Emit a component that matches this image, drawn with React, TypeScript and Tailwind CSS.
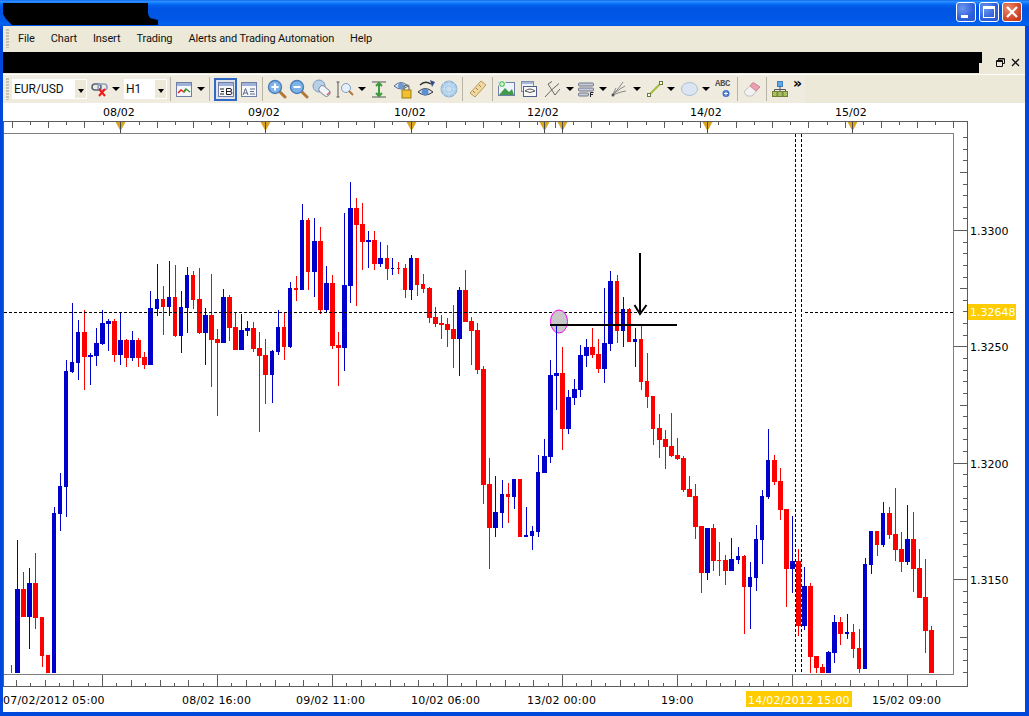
import type { ReactNode } from "react";

// [left, width, bodyTop, bodyBottom, wickTop, wickBottom]
type Candle = [number, number, number, number, number, number];

const BLUE: Candle[] = [
  [15, 5, 589, 673, 540, 673], [27, 5, 583, 617, 568, 649], [52, 4, 513, 673, 507, 673], [58, 4, 486, 514, 473, 531],
  [64, 4, 371, 487, 360, 517], [70, 4, 362, 372, 303, 373], [76, 4, 332, 363, 320, 380], [88, 5, 355, 357, 353, 385],
  [94, 5, 343, 356, 328, 366], [100, 5, 323, 344, 310, 345], [106, 5, 321, 324, 319, 351], [118, 5, 340, 355, 313, 365],
  [130, 5, 340, 358, 331, 361], [148, 5, 308, 365, 291, 365], [155, 4, 299, 309, 264, 316], [167, 4, 297, 307, 261, 316],
  [179, 4, 307, 336, 291, 353], [185, 4, 275, 308, 267, 333], [203, 5, 315, 333, 308, 365], [221, 5, 297, 343, 289, 343],
  [239, 5, 330, 350, 314, 350], [245, 5, 328, 331, 321, 336], [270, 4, 351, 375, 350, 403], [276, 4, 327, 352, 310, 355],
  [288, 4, 288, 347, 282, 348], [300, 4, 220, 290, 204, 290], [312, 5, 241, 272, 218, 297], [324, 5, 283, 310, 266, 312],
  [342, 5, 285, 348, 213, 371], [348, 5, 208, 286, 182, 303], [366, 5, 240, 242, 231, 268], [378, 5, 258, 264, 242, 267],
  [391, 3, 268, 269, 258, 275], [409, 4, 258, 290, 255, 300], [457, 5, 290, 339, 287, 376], [493, 5, 512, 528, 476, 537],
  [500, 4, 494, 513, 480, 528], [512, 4, 479, 497, 479, 509], [524, 4, 535, 537, 507, 537], [530, 4, 531, 536, 526, 550],
  [536, 4, 472, 532, 455, 537], [542, 5, 456, 473, 439, 473], [548, 5, 375, 457, 360, 463], [554, 5, 373, 376, 325, 410],
  [566, 5, 397, 429, 390, 434], [572, 5, 389, 398, 379, 405], [578, 5, 355, 390, 345, 397], [584, 5, 347, 356, 339, 367],
  [602, 5, 343, 369, 288, 383], [608, 5, 281, 344, 271, 351], [621, 4, 309, 331, 297, 347], [633, 4, 339, 342, 328, 367],
  [705, 5, 528, 573, 528, 580], [729, 5, 559, 571, 538, 571], [736, 4, 556, 560, 547, 564], [748, 4, 577, 587, 562, 629],
  [754, 4, 539, 578, 525, 591], [760, 4, 496, 540, 490, 564], [766, 4, 460, 497, 429, 499], [790, 5, 561, 569, 516, 593],
  [802, 5, 586, 626, 567, 630], [826, 5, 652, 673, 651, 673], [832, 5, 622, 653, 615, 663], [845, 4, 632, 634, 614, 639],
  [863, 4, 564, 669, 558, 669], [869, 4, 531, 565, 531, 574], [881, 4, 513, 545, 502, 547], [905, 5, 539, 562, 505, 565],
];

const RED: Candle[] = [
  [11, 1, 673, 673, 665, 673], [21, 5, 589, 617, 572, 617], [33, 5, 583, 618, 553, 629], [40, 4, 617, 656, 617, 667],
  [46, 4, 655, 673, 655, 673], [82, 5, 332, 357, 310, 390], [112, 5, 321, 355, 319, 362], [124, 5, 340, 358, 339, 367],
  [136, 5, 340, 358, 338, 367], [142, 5, 357, 365, 352, 369], [161, 4, 299, 307, 286, 335], [173, 4, 297, 336, 265, 337],
  [191, 4, 275, 300, 271, 309], [197, 5, 299, 333, 268, 334], [209, 5, 315, 340, 274, 387], [215, 5, 339, 343, 329, 416],
  [227, 5, 297, 328, 295, 341], [233, 5, 327, 350, 312, 350], [251, 5, 328, 349, 322, 352], [257, 5, 348, 356, 332, 432],
  [263, 5, 355, 375, 339, 404], [282, 4, 327, 347, 312, 360], [294, 4, 288, 290, 276, 301], [306, 4, 220, 272, 218, 290],
  [318, 5, 241, 310, 227, 314], [330, 5, 283, 346, 275, 349], [336, 5, 345, 348, 332, 386], [354, 5, 208, 225, 198, 306],
  [360, 5, 224, 242, 203, 270], [372, 5, 240, 264, 231, 270], [385, 4, 258, 269, 245, 280], [397, 3, 268, 269, 262, 274],
  [403, 4, 268, 290, 264, 298], [415, 4, 258, 285, 258, 296], [421, 4, 284, 289, 274, 293], [427, 5, 288, 318, 287, 323],
  [433, 5, 317, 324, 307, 327], [439, 5, 323, 325, 315, 339], [445, 5, 324, 330, 318, 347], [451, 5, 329, 339, 305, 368],
  [463, 5, 290, 322, 270, 322], [469, 5, 321, 331, 317, 365], [475, 5, 330, 370, 323, 374], [481, 5, 369, 485, 366, 504],
  [487, 5, 484, 528, 458, 569], [506, 4, 494, 497, 483, 523], [518, 4, 479, 537, 479, 537], [560, 5, 373, 429, 347, 450],
  [590, 5, 347, 355, 328, 358], [596, 5, 354, 369, 339, 373], [615, 4, 281, 331, 275, 343], [627, 4, 309, 342, 308, 342],
  [639, 4, 339, 382, 325, 390], [645, 4, 381, 397, 353, 408], [651, 4, 396, 429, 396, 445], [657, 5, 428, 440, 414, 458],
  [663, 5, 439, 447, 430, 469], [669, 5, 446, 456, 413, 457], [675, 5, 455, 459, 438, 460], [681, 5, 458, 490, 456, 492],
  [687, 5, 489, 497, 476, 497], [693, 5, 496, 527, 484, 539], [699, 5, 526, 573, 526, 593], [711, 5, 528, 561, 524, 571],
  [717, 4, 560, 561, 542, 576], [723, 5, 560, 571, 555, 585], [742, 4, 556, 587, 555, 634], [772, 5, 460, 482, 455, 485],
  [778, 5, 481, 510, 468, 520], [784, 5, 509, 569, 509, 607], [796, 5, 561, 626, 549, 636], [808, 5, 586, 657, 583, 673],
  [814, 5, 656, 668, 656, 673], [820, 5, 667, 673, 664, 673], [838, 5, 622, 634, 617, 645], [851, 4, 632, 649, 624, 658],
  [857, 4, 648, 669, 629, 673], [875, 4, 531, 545, 531, 556], [887, 5, 513, 535, 507, 539], [893, 5, 534, 550, 488, 561],
  [899, 5, 549, 562, 532, 572], [911, 5, 539, 569, 512, 592], [917, 5, 568, 598, 549, 598], [923, 5, 597, 631, 559, 653],
  [929, 5, 630, 673, 626, 673],
];

const TOP_LABELS: [number, string][] = [[103, "08/02"], [248, "09/02"], [394, "10/02"], [527, "12/02"], [690, "14/02"], [835, "15/02"]];
const TOP_MARKS = [120, 265, 411, 544, 562, 707, 852];
const BOTTOM_LABELS: [number, string][] = [[3, "07/02/2012 05:00"], [182, "08/02 16:00"], [296, "09/02 11:00"], [411, "10/02 06:00"], [527, "13/02 00:00"], [661, "19:00"], [872, "15/02 09:00"]];
const PRICES: [number, string][] = [[231, "1.3300"], [347, "1.3250"], [464, "1.3200"], [580, "1.3150"]];

const topTicks = Array.from({ length: 53 }, (_, i) => 12 + i * 18.1);
const bottomTicks = Array.from({ length: 66 }, (_, i) => 102 + (i - 7) * 14.375);
const rightTicks = Array.from({ length: 47 }, (_, i) => 137 + i * 11.633);

function Candles({ data, color }: { data: Candle[]; color: string }) {
  return (
    <g fill={color}>
      {data.map(([left, w, top, bottom, wickTop, wickBottom]) => (
        <g key={left}>
          <rect x={left + Math.floor(w / 2)} y={wickTop} width={1} height={wickBottom - wickTop} />
          <rect x={left} y={top} width={w} height={bottom - top} />
        </g>
      ))}
    </g>
  );
}

function ChartCanvas() {
  return (
    <svg viewBox="3 103 1022 609" className="block w-[1022px] h-[609px] font-['DejaVu_Sans',sans-serif] text-[11px]">
      <rect x="3" y="103" width="1022" height="609" fill="#fff" />
      <g fill="#000">
        {TOP_LABELS.map(([x, t]) => <text key={t} x={x} y={116}>{t}</text>)}
      </g>

      <g shapeRendering="crispEdges" stroke="#5c5c5c" fill="none">
        <path d="M3 121.5H967.5V686.5H3.5V121.5" />
        <path d="M3.5 133.5H953.5V674.5H3.5" stroke="#808080" />
        {topTicks.map((x, i) => (
          <line key={x} x1={Math.round(x) + 0.5} x2={Math.round(x) + 0.5} y1={122} y2={i % 2 ? 125 : 128} />
        ))}
        {bottomTicks.map((x, i) => {
          const k = i - 7;
          if (k % 8 === 0) return <line key={x} x1={Math.round(x) + 0.5} x2={Math.round(x) + 0.5} y1={675} y2={686} />;
          return <line key={x} x1={Math.round(x) + 0.5} x2={Math.round(x) + 0.5} y1={k % 2 ? 683 : 680} y2={686} />;
        })}
        {rightTicks.map((y, i) => {
          const k = i - 8;
          const yy = Math.round(y) + 0.5;
          if (k % 10 === 0) return <line key={y} x1={954} x2={967} y1={yy} y2={yy} />;
          return <line key={y} x1={k % 5 === 0 ? 960 : 963} x2={967} y1={yy} y2={yy} />;
        })}
      </g>
      <g fill="#d9a520">
        {TOP_MARKS.map((x) => <path key={x} d={`M${x - 4.5} 122H${x + 5.5}L${x + 0.5} 131Z`} />)}
      </g>
      <g stroke="#4a4a4a" shapeRendering="crispEdges">
        {TOP_MARKS.map((x) => <line key={x} x1={x + 0.5} x2={x + 0.5} y1={122} y2={133} />)}
      </g>

      <Candles data={BLUE} color="#0000cc" />
      <Candles data={RED} color="#ff0000" />

      {/* crosshair */}
      <g stroke="#000" strokeDasharray="3 2" shapeRendering="crispEdges">
        <line x1={4} x2={793} y1={312.5} y2={312.5} />
        <line x1={805} x2={953} y1={312.5} y2={312.5} />
        <line x1={795.5} x2={795.5} y1={134} y2={674} />
        <line x1={801.5} x2={801.5} y1={134} y2={674} />
      </g>

      {/* manual drawings */}
      <ellipse cx="559" cy="321.5" rx="8.5" ry="11.5" fill="#c8c8c8" stroke="#ff00ff" />
      <rect x="556" y="325" width="1" height="9" fill="#0000cc" />
      <rect x="550" y="324" width="127" height="2" fill="#000" />
      <path d="M640 253V313M634.5 305L640 314L646.5 305" fill="none" stroke="#000" strokeWidth="2" />

      <g fill="#000">
        {PRICES.map(([y, t]) => <text key={t} x={970} y={y + 4}>{t}</text>)}
        {BOTTOM_LABELS.map(([x, t]) => <text key={t} x={x} y={704} className="tracking-[0.2px]">{t}</text>)}
      </g>
      <rect x="968" y="304" width="48" height="16" fill="#ffcc00" />
      <text x="970" y="316" fill="#fff">1.32648</text>
      <rect x="746" y="691" width="106" height="16" fill="#ffcc00" />
      <text x="748" y="704" fill="#fff" className="tracking-[0.2px]">14/02/2012 15:00</text>
    </svg>
  );
}

function Grip() {
  return <div className="w-[3px] self-stretch my-[3px] ml-[3px] bg-[repeating-linear-gradient(to_bottom,#c4c1b1_0,#c4c1b1_2px,transparent_2px,transparent_3px)]" />;
}

function Sep() {
  return <div className="w-px h-[24px] bg-[#b8b5a6]" />;
}

function Gap({ w }: { w: string }) {
  return <div className={w} />;
}

function Arrow({ w = "w-[8px]" }: { w?: string }) {
  return (
    <div className={`${w} flex justify-center`}>
      <div className="shrink-0 w-0 h-0 border-x-[4px] border-x-transparent border-t-[4px] border-t-black" />
    </div>
  );
}

function Slot({ w, children }: { w: string; children: ReactNode }) {
  return <div className={`${w} flex items-center justify-center`}>{children}</div>;
}

function Combo({ w, label }: { w: string; label: string }) {
  return (
    <div className={`${w} h-[20px] bg-white border border-white flex items-center justify-between text-[12px] font-['Roboto',sans-serif]`}>
      <span className="pl-[1px] text-[#111]">{label}</span>
      <div className="w-[11px] h-full bg-[#ece9d8] flex items-center justify-center">
        <div className="w-0 h-0 border-x-[3.5px] border-x-transparent border-t-[4px] border-t-black mt-[3px]" />
      </div>
    </div>
  );
}

function Svg({ w = 20, h = 20, children }: { w?: number; h?: number; children: ReactNode }) {
  return <svg width={w} height={h} viewBox={`0 0 ${w} ${h}`} className="shrink-0">{children}</svg>;
}

function Magnifier({ sign }: { sign: "+" | "-" }) {
  return (
    <Svg>
      <path d="M12 12L18 18" stroke="#b5763a" strokeWidth="3" strokeLinecap="round" />
      <circle cx="8" cy="8" r="6.5" fill="#7fb3e8" stroke="#4a7fb8" strokeWidth="1.4" />
      <path d={sign === "+" ? "M4.5 8H11.5M8 4.5V11.5" : "M4.5 8H11.5"} stroke="#fff" strokeWidth="2" />
    </Svg>
  );
}

function Window({ children }: { children: ReactNode }) {
  return (
    <Svg w={16} h={15}>
      <rect x=".5" y=".5" width="15" height="14" fill="#f5f7fb" stroke="#6f7fa6" />
      <rect x="1" y="1" width="14" height="3" fill="#9fb3d8" />
      {children}
    </Svg>
  );
}

function Toolbar() {
  return (
    <div className="h-[29px] flex items-center bg-[#ece9d8] border-t border-t-white">
      <div className="h-full w-[802px] flex items-center bg-[#efecdf]">
        <Grip />
        <Gap w="w-[3px]" />
        <Combo w="w-[75px]" label="EUR/USD" />
        <Gap w="w-[3px]" />
        <Slot w="w-[20px]">
          <Svg w={18} h={16}>
            <rect x="1" y="3" width="9" height="6" rx="3" fill="none" stroke="#55657f" strokeWidth="1.6" />
            <rect x="7" y="3" width="9" height="6" rx="3" fill="none" stroke="#8ba0c0" strokeWidth="1.6" />
            <path d="M8 8L14 15M14 8L8 15" stroke="#f01818" strokeWidth="2" />
          </Svg>
        </Slot>
        <Slot w="w-[12px]"><Arrow /></Slot>
        <Gap w="w-[2px]" />
        <Combo w="w-[43px]" label="H1" />
        <Gap w="w-[3px]" />
        <Sep />
        <Slot w="w-[26px]">
          <Window><path d="M2 11L5 8L8 10L10 7" stroke="#e02020" fill="none" strokeWidth="1.5" /><path d="M8 10L10 7L14 10" stroke="#30a030" fill="none" strokeWidth="1.5" /></Window>
        </Slot>
        <Arrow />
        <Gap w="w-[4px]" />
        <Sep />
        <Gap w="w-[4px]" />
        <div className="w-[23px] h-[23px] border-2 border-[#316ac5] bg-[#e2e3ea] flex items-center justify-center">
          <Window>
            <path d="M2 7H6M3 9.5H6M2 12H6" stroke="#222" />
            <path d="M8.5 6.5H12Q13.5 6.5 13.5 8Q13.5 9.5 12 9.5H8.5M12 9.5Q14 9.5 14 11Q14 12.5 12 12.5H8.5V6.5" fill="none" stroke="#222" />
          </Window>
        </div>
        <Slot w="w-[23px]">
          <Window>
            <path d="M2 13L4.5 6.5L7 13M3 11H6" fill="none" stroke="#5a6a88" />
            <path d="M9 7H14M9 9.5H13M9 12H14" stroke="#5a6a88" />
          </Window>
        </Slot>
        <Gap w="w-[2px]" />
        <Sep />
        <Gap w="w-[3px]" />
        <Slot w="w-[22px]"><Magnifier sign="+" /></Slot>
        <Slot w="w-[22px]"><Magnifier sign="-" /></Slot>
        <Slot w="w-[23px]">
          <Svg>
            <circle cx="7" cy="7" r="6" fill="#b8cfe8" stroke="#7f9bc0" />
            <rect x="7" y="8" width="12" height="7" rx="3" transform="rotate(40 12 11)" fill="#f2f4f8" stroke="#8a92a8" />
            <path d="M15 16L18 13" stroke="#d86060" strokeWidth="1.5" />
          </Svg>
        </Slot>
        <Slot w="w-[24px]">
          <Svg>
            <path d="M3 3V18M1.5 3H4.5M1.5 18H4.5" stroke="#555" fill="none" />
            <circle cx="11" cy="9" r="4.5" fill="#e6f0fa" stroke="#7f9bc0" />
            <path d="M14 12L18 16" stroke="#b5763a" strokeWidth="2" />
          </Svg>
        </Slot>
        <Slot w="w-[10px]"><Arrow /></Slot>
        <Slot w="w-[24px]">
          <Svg>
            <path d="M3 3H17M3 18H17" stroke="#555" />
            <path d="M10 4V16M7 7L10 4L13 7M7 14L10 17L13 14" stroke="#3c9a3c" strokeWidth="2" fill="none" />
          </Svg>
        </Slot>
        <Slot w="w-[24px]">
          <Svg>
            <path d="M1 7Q8 0 15 7Q8 13 1 7Z" fill="#d8e4f2" stroke="#5a6a88" />
            <circle cx="8" cy="7" r="3" fill="#6f9ad0" />
            <rect x="9" y="11" width="9" height="8" fill="#f0c030" stroke="#a07c10" />
            <path d="M11 11V8.5A2.5 2.5 0 0 1 16 8.5V11" fill="none" stroke="#777" strokeWidth="1.3" />
          </Svg>
        </Slot>
        <Slot w="w-[22px]">
          <Svg>
            <path d="M2 13Q9 6 17 13Q9 19 2 13Z" fill="#d8e4f2" stroke="#333" />
            <circle cx="9" cy="13" r="3.5" fill="#5d8ed0" />
            <path d="M4 6Q9 1 15 5" stroke="#333" strokeWidth="1.3" fill="none" />
            <path d="M14 1L19 3L16 8Z" fill="#3a4a8a" />
          </Svg>
        </Slot>
        <Slot w="w-[24px]">
          <Svg>
            <circle cx="10" cy="10" r="8" fill="#a7cbe8" stroke="#8fb0d0" />
            <circle cx="10" cy="10" r="5" fill="none" stroke="#d5e6f4" />
            <circle cx="10" cy="10" r="2" fill="none" stroke="#d5e6f4" />
            <path d="M10 2V18M2 10H18M4 4L16 16M16 4L4 16" stroke="#d5e6f4" strokeWidth=".6" />
          </Svg>
        </Slot>
        <Gap w="w-px" />
        <Sep />
        <Slot w="w-[29px]">
          <Svg>
            <path d="M2 14L13 2L18 6L7 18Z" fill="#f0d8a0" stroke="#b89a5a" />
            <path d="M5 12L7 14M8 9L10 11M11 6L13 8" stroke="#a08040" />
          </Svg>
        </Slot>
        <Sep />
        <Slot w="w-[28px]">
          <Svg>
            <rect x="1.5" y="3.5" width="16" height="13" fill="#eef4fb" stroke="#6f7fa6" />
            <path d="M2 16L8 9L12 13L15 10L17 16Z" fill="#3f9a4a" />
            <circle cx="5" cy="5" r="3.5" fill="#58c060" stroke="#fff" />
            <path d="M3 5H7M5 3V7" stroke="#fff" />
          </Svg>
        </Slot>
        <Slot w="w-[16px]">
          <Svg w={16} h={16}>
            <rect x=".5" y=".5" width="12" height="10" fill="#eef2f9" stroke="#7f8fb0" />
            <rect x="1" y="1" width="11" height="2" fill="#a8b8d8" />
            <rect x="2.5" y="5.5" width="13" height="10" fill="#f8f8fb" stroke="#4f5f88" />
            <path d="M4 10Q9 6 14 10Q9 13 4 10Z" fill="none" stroke="#555" />
          </Svg>
        </Slot>
        <Slot w="w-[30px]">
          <Svg w={17} h={17}>
            <path d="M1 16L7.5 9L15 2.5M4 3L11 14M4 3L8 .5M11 14L16 8" stroke="#666" fill="none" />
          </Svg>
        </Slot>
        <Slot w="w-[6px]"><Arrow /></Slot>
        <Slot w="w-[26px]">
          <Svg w={16} h={15}>
            <rect x=".5" y="1" width="15" height="3" rx="1" fill="#c8ccd8" stroke="#6f7688" />
            <rect x=".5" y="6" width="15" height="3" rx="1" fill="#c8ccd8" stroke="#6f7688" />
            <rect x=".5" y="11" width="10" height="3" rx="1" fill="#c8ccd8" stroke="#6f7688" />
            <path d="M12.5 15V10.5H15.5M12.5 12.5H15" stroke="#222" fill="none" />
          </Svg>
        </Slot>
        <Arrow />
        <Slot w="w-[24px]">
          <Svg w={16} h={16}>
            <path d="M1.5 14L7 8L12 1M1.5 14L9 8L14 5M1.5 14L10 11L15 10M1.5 14L5 7" stroke="#888" fill="none" />
            <circle cx="2" cy="14" r="1.5" fill="#555" />
          </Svg>
        </Slot>
        <Slot w="w-[12px]"><Arrow /></Slot>
        <Slot w="w-[24px]">
          <Svg w={16} h={16}>
            <path d="M2 14L14 2" stroke="#9cbe3c" strokeWidth="2" />
            <rect x="0.5" y="12.5" width="3" height="3" fill="#fff" stroke="#6a7a3a" />
            <rect x="12.5" y=".5" width="3" height="3" fill="#fff" stroke="#6a7a3a" />
          </Svg>
        </Slot>
        <Arrow />
        <Gap w="w-[2px]" />
        <Slot w="w-[24px]">
          <Svg w={17} h={14}>
            <ellipse cx="8.5" cy="7" rx="8" ry="6.5" fill="#dbe6f2" stroke="#a9bfd8" />
          </Svg>
        </Slot>
        <Slot w="w-[10px]"><Arrow /></Slot>
        <Slot w="w-[24px]">
          <div className="relative w-[16px] h-[17px]">
            <span className="absolute left-0 top-[-3px] text-[9px] font-bold font-['Liberation_Mono',monospace] tracking-[-0.4px] text-[#555]">ABC</span>
            <Svg w={16} h={17}>
              <circle cx="11" cy="12.5" r="3.5" fill="#3f74c8" />
              <path d="M9 12.5H13M11 10.5V14.5" stroke="#fff" />
            </Svg>
          </div>
        </Slot>
        <Gap w="w-[2px]" />
        <Sep />
        <Slot w="w-[28px]">
          <Svg w={18} h={16}>
            <path d="M1 11L10 1.5L17 6L9 15H4Z" fill="#f2f2f2" stroke="#c0c0c0" />
            <path d="M7 5L10 1.5L17 6L13 10Z" fill="#eaa0b0" stroke="#d08898" />
          </Svg>
        </Slot>
        <Sep />
        <Slot w="w-[26px]">
          <Svg w={16} h={16}>
            <rect x="5.5" y=".5" width="5" height="5" fill="#5ba8e8" stroke="#4080c0" />
            <path d="M8 5V9M2.5 11V8.5H13.5V11M8 8V11" stroke="#556" fill="none" />
            <rect x=".5" y="10.5" width="4.5" height="5" fill="#a8c060" stroke="#708030" />
            <rect x="5.7" y="10.5" width="4.5" height="5" fill="#a8c060" stroke="#708030" />
            <rect x="11" y="10.5" width="4.5" height="5" fill="#a8c060" stroke="#708030" />
          </Svg>
        </Slot>
        <div className="w-[11px] self-start mt-[1px] text-[14px] leading-[14px] font-bold font-['DejaVu_Sans',sans-serif]">»</div>
      </div>
    </div>
  );
}

function CaptionButton({ tone, children }: { tone: "blue" | "red"; children: ReactNode }) {
  const bg = tone === "red"
    ? "bg-[radial-gradient(circle_at_30%_30%,#e98a6f,#d4492a_60%,#b8301a)]"
    : "bg-[radial-gradient(circle_at_30%_30%,#6f97ee,#2f60dc_60%,#2a52c8)]";
  return <div className={`w-[20px] h-[20px] rounded-[3px] border border-white relative overflow-hidden ${bg}`}>{children}</div>;
}

export default function App() {
  return (
    <div className="w-[1029px] h-[716px] overflow-hidden flex flex-col bg-[#0048dc] font-['Roboto',sans-serif]">
      {/* title bar */}
      <div className="h-[26px] flex items-start justify-between bg-[linear-gradient(to_bottom,#0058ee_0,#3593ff_1px,#127dff_3px,#0262ee_5px,#0054e3_9px,#0058e6_20px,#0064f0_24px,#0054e3_26px)]">
        <svg width="160" height="26" className="shrink-0">
          <path d="M3 3H148V14L150 18L158 20V25H12L6 19L3 14Z" fill="#000" />
        </svg>
        <div className="flex gap-[3px] pt-[2px] pr-[7px]">
          <CaptionButton tone="blue">
            <div className="absolute left-[4px] bottom-[3px] w-[7px] h-[3px] bg-white" />
          </CaptionButton>
          <CaptionButton tone="blue">
            <div className="absolute left-[3px] top-[3px] w-[12px] h-[12px] border border-white border-t-[3px]" />
          </CaptionButton>
          <CaptionButton tone="red">
            <svg width="18" height="18" className="absolute left-0 top-0">
              <path d="M4 4L14 14M14 4L4 14" stroke="#fff" strokeWidth="2.2" />
            </svg>
          </CaptionButton>
        </div>
      </div>

      {/* client area */}
      <div className="flex-1 ml-[3px] mb-[4px] mr-[4px] flex flex-col bg-white">
        <div className="h-[25px] flex items-center bg-[#ece9d8] text-[11px] text-[#111]">
          <Grip />
          <div className="flex gap-[16px] pl-[9px] pt-[2px] tracking-[-0.12px]">
            <span>File</span>
            <span>Chart</span>
            <span>Insert</span>
            <span>Trading</span>
            <span>Alerts and Trading Automation</span>
            <span>Help</span>
          </div>
        </div>

        <div className="h-[23px] flex items-center bg-[#ece9d8]">
          <svg width="980" height="23" className="shrink-0">
            <path d="M0 1H979V12H976V22H0Z" fill="#000" />
          </svg>
          <div className="flex items-center gap-[5px] pl-[13px]">
            <svg width="9" height="9">
              <path d="M2.5 2.5V.5H8.5V5.5H6.5M.5 2.5H6.5V8.5H.5Z" fill="none" stroke="#111" />
              <path d="M3 1H8M1 3.5H6" stroke="#111" />
            </svg>
            <svg width="9" height="9" className="ml-[1px]">
              <path d="M1 1L8 8M8 1L1 8" stroke="#111" strokeWidth="1.3" />
            </svg>
          </div>
        </div>

        <Toolbar />
        <ChartCanvas />
      </div>
    </div>
  );
}
